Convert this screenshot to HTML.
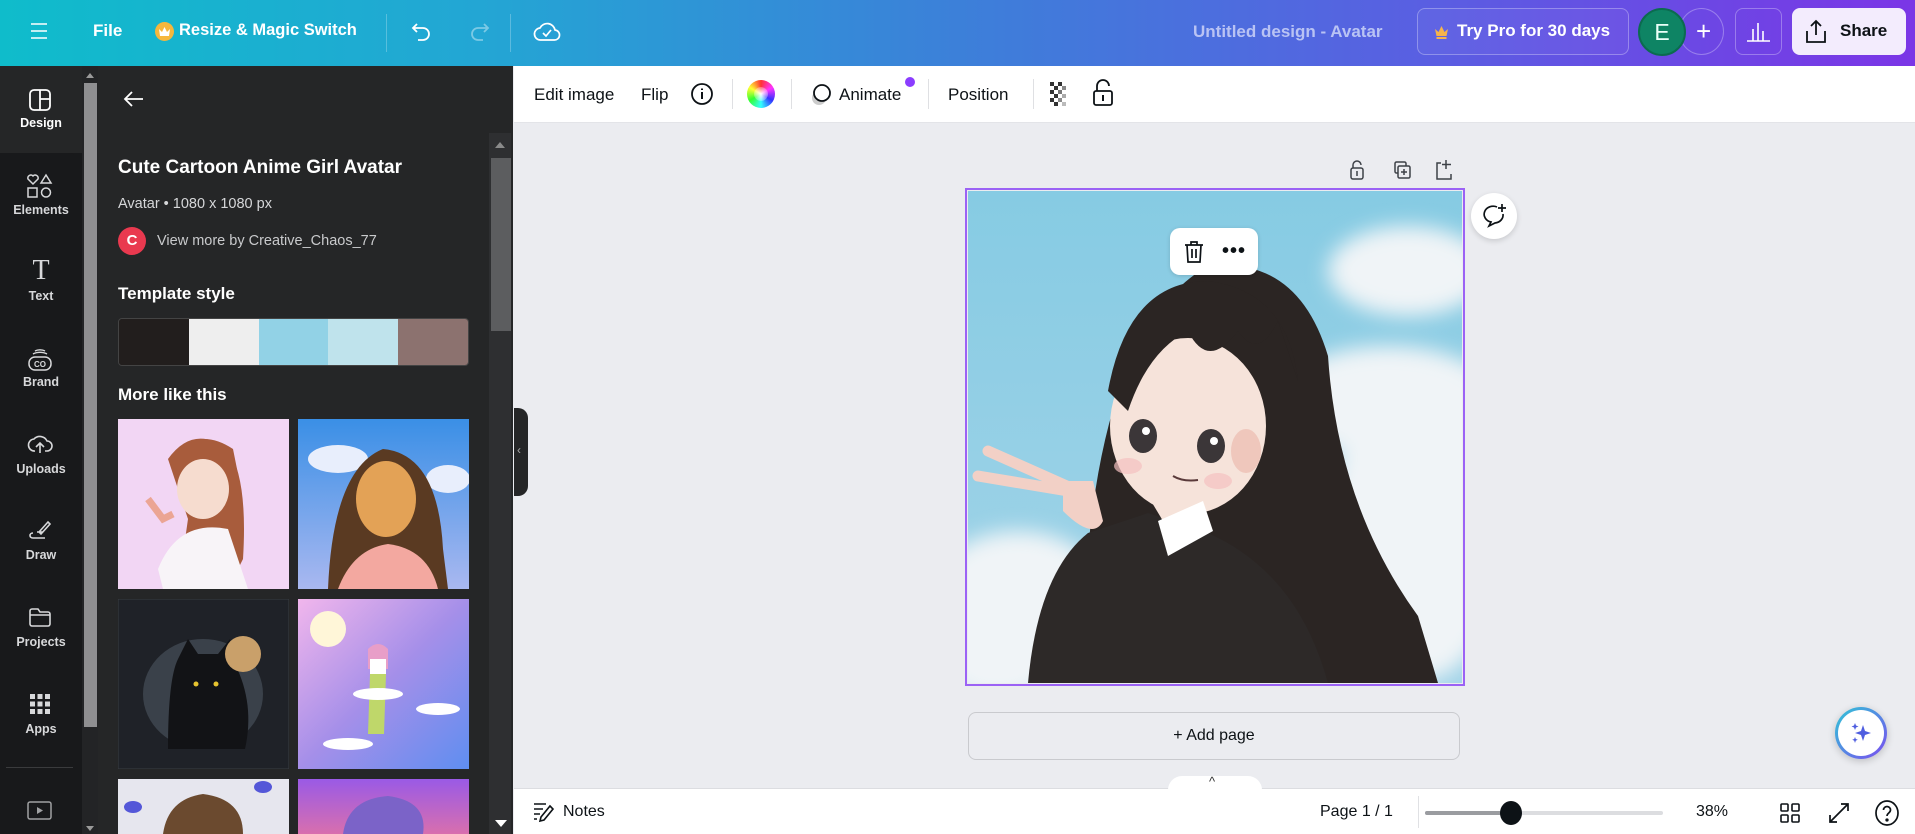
<!DOCTYPE html>
<html><head><meta charset="utf-8">
<style>
*{margin:0;padding:0;box-sizing:border-box}
body{width:1915px;height:834px;overflow:hidden;font-family:"Liberation Sans",sans-serif;background:#ebecf0;position:relative}
.a{position:absolute}
.hdr{left:0;top:0;width:1915px;height:66px;background:linear-gradient(90deg,#0fbccb 0%,#23a6d4 25%,#3c80d9 50%,#5a5ee2 75%,#7b35e6 100%)}
.ht{color:#fff;font-size:17px;font-weight:bold;top:21px}
.vd{width:1px;height:38px;background:rgba(255,255,255,.25);top:14px}
.rail{left:0;top:66px;width:82px;height:768px;background:#18191b}
.ri{width:82px;text-align:center;color:#d7d8da;font-size:12.5px;font-weight:bold}
.panel{left:98px;top:66px;width:415px;height:768px;background:#252627}
.pt{color:#fff}
.tb{left:514px;top:66px;width:1401px;height:57px;background:#fff;border-bottom:1px solid #e3e4e8}
.tt{font-size:17px;color:#0d1216;top:85px}
.td{width:1px;height:30px;background:#dfe0e3;top:79px}
.bb{left:514px;top:788px;width:1401px;height:46px;background:#fff;border-top:1px solid #dcdde1}
.bt{font-size:16px;color:#0d1216;top:803px}
</style></head><body>
<div class="a hdr"></div>
<svg class="a" style="left:29px;top:21px" width="20" height="20" viewBox="0 0 20 20"><path d="M2 3h16M2 10h16M2 17h16" stroke="#fff" stroke-width="1.6"/></svg>
<div class="a ht" style="left:93px">File</div>
<div class="a" style="left:155px;top:22px;width:19px;height:19px;border-radius:50%;background:#f6b73c"></div>
<svg class="a" style="left:158px;top:25px" width="13" height="13" viewBox="0 0 13 13"><path d="M1 4l3 3 2.5-5L9 7l3-3-1 7H2z" fill="#fff"/></svg>
<div class="a ht" style="left:179px;font-size:16.5px">Resize &amp; Magic Switch</div>
<div class="a vd" style="left:386px"></div>
<svg class="a" style="left:409px;top:19px" width="26" height="26" viewBox="0 0 26 26"><path d="M8 5L4 9l4 4M4 9h10a6 6 0 010 12H9" stroke="#fff" stroke-width="1.8" fill="none"/></svg>
<svg class="a" style="left:466px;top:19px" width="26" height="26" viewBox="0 0 26 26" opacity=".4"><path d="M18 5l4 4-4 4M22 9H12a6 6 0 000 12h5" stroke="#fff" stroke-width="1.8" fill="none"/></svg>
<div class="a vd" style="left:510px"></div>
<svg class="a" style="left:532px;top:17px" width="30" height="30" viewBox="0 0 30 30"><path d="M9 23a6 6 0 01-1-12 8 8 0 0115 2 5 5 0 01-1 10z" stroke="#fff" stroke-width="1.7" fill="none"/><path d="M11 16l3 3 5-6" stroke="#fff" stroke-width="1.7" fill="none"/></svg>
<div class="a" style="left:1193px;top:22px;color:#b9c3f4;font-size:17px;font-weight:bold">Untitled design - Avatar</div>
<div class="a" style="left:1417px;top:8px;width:212px;height:47px;border:1px solid rgba(255,255,255,.3);border-radius:8px;background:rgba(255,255,255,.04)"></div>
<svg class="a" style="left:1434px;top:25px" width="15" height="14" viewBox="0 0 15 14"><path d="M1 4l3.5 3L7.5 1l3 6L14 4l-1.5 7h-10z" fill="#f7b44b"/><rect x="2.5" y="12" width="10" height="2" fill="#f7b44b"/></svg>
<div class="a ht" style="left:1457px;top:21px">Try Pro for 30 days</div>
<div class="a" style="left:1679px;top:8px;width:45px;height:47px;border:1px solid rgba(255,255,255,.3);border-radius:50%"></div>
<div class="a" style="left:1696px;top:13px;color:#fff;font-size:26px;line-height:36px">+</div>
<div class="a" style="left:1638px;top:8px;width:48px;height:48px;border-radius:50%;background:#0e8464;border:2px solid #0b6b50;color:#e9fff8;font-size:23px;line-height:44px;text-align:center">E</div>
<div class="a" style="left:1735px;top:8px;width:47px;height:47px;border:1px solid rgba(255,255,255,.3);border-radius:8px"></div>
<svg class="a" style="left:1746px;top:19px" width="25" height="24" viewBox="0 0 25 24"><path d="M1 22h23M7 22V10M12 22V4M17 22V12" stroke="#fff" stroke-width="1.6"/></svg>
<div class="a" style="left:1792px;top:8px;width:114px;height:47px;border-radius:8px;background:#f3ecfd"></div>
<svg class="a" style="left:1804px;top:18px" width="24" height="26" viewBox="0 0 24 26"><path d="M12 17V3M7 8l5-5 5 5M3 13v11h18V13" stroke="#0d1216" stroke-width="1.8" fill="none"/></svg>
<div class="a" style="left:1840px;top:21px;font-size:17px;font-weight:bold;color:#0d1216">Share</div>

<div class="a rail"></div>
<div class="a" style="left:0;top:66px;width:82px;height:87px;background:#252627"></div>
<div class="a" style="left:0;top:153px;width:82px;height:20px;background:#18191b;border-top-right-radius:14px"></div>
<svg class="a" style="left:28px;top:88px" width="24" height="24" viewBox="0 0 24 24"><rect x="2" y="2" width="20" height="20" rx="4" stroke="#fff" stroke-width="1.8" fill="none"/><path d="M12 2v20M12 11h10" stroke="#fff" stroke-width="1.8"/></svg>
<div class="a ri" style="left:0;top:116px;color:#fff">Design</div>
<svg class="a" style="left:26px;top:173px" width="28" height="26" viewBox="0 0 28 26"><path d="M7 11L2 6a3 3 0 015-3 3 3 0 015 3z" stroke="#d7d8da" stroke-width="1.5" fill="none"/><path d="M20 2l5 8H15z" stroke="#d7d8da" stroke-width="1.5" fill="none"/><rect x="2" y="15" width="9" height="9" stroke="#d7d8da" stroke-width="1.5" fill="none"/><circle cx="20" cy="19.5" r="4.5" stroke="#d7d8da" stroke-width="1.5" fill="none"/></svg>
<div class="a ri" style="left:0;top:203px">Elements</div>
<div class="a ri" style="left:0;top:255px;font-family:'Liberation Serif',serif;font-size:28px;font-weight:normal">T</div>
<div class="a ri" style="left:0;top:289px">Text</div>
<svg class="a" style="left:27px;top:347px" width="26" height="26" viewBox="0 0 26 26"><path d="M6 7a10 6 0 0114 0M8 4a7 4 0 0110 0" stroke="#d7d8da" stroke-width="1.4" fill="none"/><rect x="2" y="10" width="22" height="13" rx="6" stroke="#d7d8da" stroke-width="1.5" fill="none"/><text x="13" y="20" font-size="8" font-weight="bold" fill="#d7d8da" text-anchor="middle" font-family="Liberation Sans">CO</text></svg>
<div class="a ri" style="left:0;top:375px">Brand</div>
<svg class="a" style="left:27px;top:432px" width="26" height="24" viewBox="0 0 26 24"><path d="M8 19a6 6 0 01-1-12 8 8 0 0113 2 5 5 0 010 10h-2" stroke="#d7d8da" stroke-width="1.6" fill="none"/><path d="M13 21v-9M9 15l4-4 4 4" stroke="#d7d8da" stroke-width="1.6" fill="none"/></svg>
<div class="a ri" style="left:0;top:462px">Uploads</div>
<svg class="a" style="left:27px;top:518px" width="26" height="24" viewBox="0 0 26 24"><path d="M12 14l9-10 2 2-9 10zM10 14h6M6 15c-4 0-4 5 0 5h12" stroke="#d7d8da" stroke-width="1.6" fill="none"/></svg>
<div class="a ri" style="left:0;top:548px">Draw</div>
<svg class="a" style="left:28px;top:606px" width="24" height="22" viewBox="0 0 24 22"><path d="M2 5a2 2 0 012-2h6l2 3h8a2 2 0 012 2v10a2 2 0 01-2 2H4a2 2 0 01-2-2zM2 9h20" stroke="#d7d8da" stroke-width="1.6" fill="none"/></svg>
<div class="a ri" style="left:0;top:635px">Projects</div>
<svg class="a" style="left:29px;top:693px" width="22" height="22" viewBox="0 0 22 22" fill="#d7d8da"><rect x="1" y="1" width="5" height="5"/><rect x="8.5" y="1" width="5" height="5"/><rect x="16" y="1" width="5" height="5"/><rect x="1" y="8.5" width="5" height="5"/><rect x="8.5" y="8.5" width="5" height="5"/><rect x="16" y="8.5" width="5" height="5"/><rect x="1" y="16" width="5" height="5"/><rect x="8.5" y="16" width="5" height="5"/><rect x="16" y="16" width="5" height="5"/></svg>
<div class="a ri" style="left:0;top:722px">Apps</div>
<div class="a" style="left:6px;top:767px;width:67px;height:1px;background:#3a3b3d"></div>
<svg class="a" style="left:27px;top:801px" width="25" height="19" viewBox="0 0 25 19"><rect x="1" y="1" width="23" height="17" rx="2" stroke="#a0a1a3" stroke-width="1.5" fill="none"/><path d="M10 6l6 3.5-6 3.5z" fill="#a0a1a3"/></svg>
<div class="a" style="left:82px;top:66px;width:16px;height:768px;background:#232426"></div>
<div class="a" style="left:84px;top:83px;width:13px;height:644px;background:#8f8f91"></div>
<div class="a" style="left:86px;top:73px;border:4px solid transparent;border-bottom:5px solid #9a9a9a;border-top:0"></div>
<div class="a" style="left:86px;top:826px;border:4px solid transparent;border-top:5px solid #9a9a9a;border-bottom:0"></div>

<div class="a panel"></div>
<svg class="a" style="left:123px;top:88px" width="22" height="22" viewBox="0 0 22 22"><path d="M20 11H3M9 4l-7 7 7 7" stroke="#fff" stroke-width="1.8" fill="none"/></svg>
<div class="a pt" style="left:118px;top:157px;font-size:19px;font-weight:bold">Cute Cartoon Anime Girl Avatar</div>
<div class="a" style="left:118px;top:196px;font-size:14.5px;color:#d6d7d9">Avatar • 1080 x 1080 px</div>
<div class="a" style="left:118px;top:227px;width:28px;height:28px;border-radius:50%;background:#e9394f;color:#fff;font-size:15px;font-weight:bold;text-align:center;line-height:28px">C</div>
<div class="a" style="left:157px;top:233px;font-size:14.5px;color:#c9cacc">View more by Creative_Chaos_77</div>
<div class="a pt" style="left:118px;top:284px;font-size:17px;font-weight:bold">Template style</div>
<div class="a" style="left:118px;top:318px;width:351px;height:48px;border-radius:4px;overflow:hidden;display:flex;border:1px solid #444">
<div style="flex:1;background:#221e1d"></div><div style="flex:1;background:#eeeeee"></div><div style="flex:1;background:#92d2e6"></div><div style="flex:1;background:#bfe3ec"></div><div style="flex:1;background:#8c726f"></div></div>
<div class="a pt" style="left:118px;top:385px;font-size:17px;font-weight:bold">More like this</div>
<svg class="a" style="left:118px;top:419px" width="171" height="170"><rect width="171" height="170" fill="#f2d6f4"/><path d="M50 40q25-35 60-10q20 30 15 110l-15 30H60l10-70z" fill="#a85c3c"/><ellipse cx="85" cy="70" rx="26" ry="30" fill="#f6dccf"/><path d="M55 50q30-40 65 5l-5-25q-30-20-55 0z" fill="#a85c3c"/><path d="M40 150q20-50 70-40l20 60H45z" fill="#f8f4f8"/><path d="M30 80l15 20 10-5" stroke="#eba594" stroke-width="7" fill="none"/></svg>
<svg class="a" style="left:298px;top:419px" width="171" height="170"><defs><linearGradient id="g2" x1="0" y1="0" x2="0" y2="1"><stop offset="0" stop-color="#3a8fe6"/><stop offset="1" stop-color="#a9b8f0"/></linearGradient></defs><rect width="171" height="170" fill="url(#g2)"/><ellipse cx="40" cy="40" rx="30" ry="14" fill="#e8eefc"/><ellipse cx="150" cy="60" rx="22" ry="14" fill="#e8eefc"/><path d="M30 170q5-120 55-140q55 5 60 100l5 40z" fill="#5a3a22"/><ellipse cx="88" cy="80" rx="30" ry="38" fill="#e3a256"/><path d="M40 170q15-40 50-45q40 5 50 45z" fill="#f3a8a0"/></svg>
<svg class="a" style="left:118px;top:599px" width="171" height="170"><rect width="171" height="170" fill="#1f2228" stroke="#3a3d42"/><ellipse cx="85" cy="95" rx="60" ry="55" fill="#4c5660" opacity=".6"/><path d="M50 150q0-70 10-90l10-20 10 15h20l12-15 5 25q20 40 10 85z" fill="#121316"/><circle cx="125" cy="55" r="18" fill="#c9a06a"/><circle cx="78" cy="85" r="2.5" fill="#e6c430"/><circle cx="98" cy="85" r="2.5" fill="#e6c430"/></svg>
<svg class="a" style="left:298px;top:599px" width="171" height="170"><defs><linearGradient id="g4" x1="0" y1="0" x2="1" y2="1"><stop offset="0" stop-color="#f1b6ec"/><stop offset=".5" stop-color="#a58fe9"/><stop offset="1" stop-color="#5f8ef0"/></linearGradient></defs><rect width="171" height="170" fill="url(#g4)"/><circle cx="30" cy="30" r="18" fill="#fff6d8"/><path d="M70 50q10-10 20 0v20H70z" fill="#e89ec8"/><rect x="72" y="60" width="16" height="15" fill="#fff"/><path d="M72 75h16l-2 60H70z" fill="#bfd76a"/><ellipse cx="80" cy="95" rx="25" ry="6" fill="#fff"/><ellipse cx="140" cy="110" rx="22" ry="6" fill="#fff"/><ellipse cx="50" cy="145" rx="25" ry="6" fill="#fff"/></svg>
<svg class="a" style="left:118px;top:779px" width="171" height="55"><rect width="171" height="55" fill="#e6e6ee"/><path d="M45 55q5-35 40-40q40 5 40 40z" fill="#6b4a2f"/><ellipse cx="15" cy="28" rx="9" ry="6" fill="#5457d8"/><ellipse cx="145" cy="8" rx="9" ry="6" fill="#5457d8"/></svg>
<svg class="a" style="left:298px;top:779px" width="171" height="55"><defs><linearGradient id="g6" x1="0" y1="0" x2="0" y2="1"><stop offset="0" stop-color="#9a5ae6"/><stop offset="1" stop-color="#d86fae"/></linearGradient></defs><rect width="171" height="55" fill="url(#g6)"/><path d="M45 55q5-35 45-38q40 5 35 38z" fill="#7b63c8"/></svg>
<div class="a" style="left:489px;top:133px;width:22px;height:701px;background:#2e2f31"></div>
<div class="a" style="left:491px;top:158px;width:20px;height:173px;background:#5c5d5f"></div>
<div class="a" style="left:495px;top:142px;border:5px solid transparent;border-bottom:6px solid #8a8a8a;border-top:0"></div>
<div class="a" style="left:495px;top:820px;border:6px solid transparent;border-top:7px solid #fff;border-bottom:0"></div>
<div class="a" style="left:514px;top:408px;width:14px;height:88px;background:#252627;border-radius:0 10px 10px 0"></div>
<div class="a" style="left:517px;top:443px;color:#aaa;font-size:12px">‹</div>

<div class="a tb"></div>
<div class="a tt" style="left:534px">Edit image</div>
<div class="a tt" style="left:641px">Flip</div>
<svg class="a" style="left:690px;top:82px" width="24" height="24" viewBox="0 0 24 24"><circle cx="12" cy="12" r="10" stroke="#0d1216" stroke-width="1.8" fill="none"/><path d="M12 10v7M12 6.5v1.5" stroke="#0d1216" stroke-width="2"/></svg>
<div class="a td" style="left:732px"></div>
<div class="a" style="left:747px;top:80px;width:28px;height:28px;border-radius:50%;background:conic-gradient(#f33,#f3f,#33f,#3ff,#3f3,#ff3,#f33)"><div style="margin:7px;width:14px;height:14px;border-radius:50%;background:radial-gradient(#fff,rgba(255,255,255,0))"></div></div>
<div class="a td" style="left:791px"></div>
<svg class="a" style="left:808px;top:82px" width="26" height="26" viewBox="0 0 26 26"><circle cx="11" cy="16" r="7" fill="#ccc"/><circle cx="14" cy="11" r="8" stroke="#0d1216" stroke-width="1.8" fill="#fff"/></svg>
<div class="a tt" style="left:839px">Animate</div>
<div class="a" style="left:905px;top:77px;width:10px;height:10px;border-radius:50%;background:#8b3dff"></div>
<div class="a td" style="left:928px"></div>
<div class="a tt" style="left:948px">Position</div>
<div class="a td" style="left:1033px"></div>
<svg class="a" style="left:1050px;top:82px" width="24" height="24" viewBox="0 0 24 24"><g fill="#333"><rect x="0" y="0" width="4" height="4"/><rect x="8" y="0" width="4" height="4"/><rect x="4" y="4" width="4" height="4"/><rect x="12" y="4" width="4" height="4" fill="#888"/><rect x="0" y="8" width="4" height="4"/><rect x="8" y="8" width="4" height="4" fill="#777"/><rect x="4" y="12" width="4" height="4"/><rect x="12" y="12" width="4" height="4" fill="#aaa"/><rect x="0" y="16" width="4" height="4"/><rect x="8" y="16" width="4" height="4" fill="#888"/><rect x="4" y="20" width="4" height="4"/><rect x="12" y="20" width="4" height="4" fill="#bbb"/></g></svg>
<svg class="a" style="left:1092px;top:79px" width="22" height="28" viewBox="0 0 22 28"><path d="M5 12V7a6 6 0 0112 0" stroke="#0d1216" stroke-width="1.8" fill="none"/><rect x="2" y="12" width="18" height="14" rx="2" stroke="#0d1216" stroke-width="1.8" fill="none"/><path d="M11 16v6" stroke="#0d1216" stroke-width="2"/></svg>

<svg class="a" style="left:1347px;top:158px" width="108" height="24" viewBox="0 0 108 24" stroke="#3d4147" stroke-width="1.5" fill="none"><path d="M6 10V7a4 4 0 018 0"/><rect x="4" y="10" width="12" height="11" rx="2"/><path d="M10 13v5"/><rect x="48" y="4" width="11" height="11" rx="1.5"/><rect x="51" y="8" width="12" height="12" rx="1.5" fill="#ebecf0"/><path d="M57 11v6M54 14h6"/><path d="M94 5h-4v16h14v-5M99 2v9M95 6.5h9"/></svg>
<div class="a" style="left:965px;top:188px;width:500px;height:498px;border:2px solid #9b62f5"></div>
<svg class="a" style="left:968px;top:191px" width="494" height="492" viewBox="0 0 494 492">
<defs><linearGradient id="sky" x1="0" y1="0" x2="0" y2="1"><stop offset="0" stop-color="#86cbe3"/><stop offset="1" stop-color="#a3d4e8"/></linearGradient>
<filter id="bl"><feGaussianBlur stdDeviation="10"/></filter></defs>
<rect width="494" height="492" fill="url(#sky)"/>
<g fill="#f0f4f7" filter="url(#bl)"><ellipse cx="440" cy="80" rx="80" ry="45"/><ellipse cx="420" cy="210" rx="110" ry="55"/><ellipse cx="450" cy="340" rx="90" ry="150"/><ellipse cx="50" cy="410" rx="90" ry="70"/><ellipse cx="30" cy="470" rx="60" ry="40"/></g>
<path d="M115 440q10-300 125-365q90-10 120 90q10 150 90 260l20 67H150z" fill="#2b2523"/>
<path d="M60 492q10-110 60-150l60-20 60 20q90 40 120 150z" fill="#2d2928"/>
<path d="M95 290l0 30q30 30 40 10l-10-40z" fill="#f2d0c6"/>
<path d="M20 260l90 40M10 285l90 15" stroke="#f2d0c6" stroke-width="11" stroke-linecap="round"/>
<ellipse cx="220" cy="235" rx="78" ry="88" fill="#f6e3da"/>
<path d="M180 305h60l-15 25h-30z" fill="#f6e3da"/>
<path d="M190 330l45-20 10 30-45 25z" fill="#fff"/>
<path d="M140 200q20-110 100-110q80 10 90 100l-20-60q-20 40-40 10q-30 40-50 0q-40 20-60 80z" fill="#2b2523"/>
<ellipse cx="175" cy="245" rx="14" ry="17" fill="#3b3638"/><ellipse cx="243" cy="255" rx="14" ry="17" fill="#3b3638"/>
<circle cx="178" cy="240" r="4" fill="#fff"/><circle cx="246" cy="250" r="4" fill="#fff"/>
<ellipse cx="160" cy="275" rx="14" ry="8" fill="#f5c0c0" opacity=".7"/><ellipse cx="250" cy="290" rx="14" ry="8" fill="#f5c0c0" opacity=".7"/>
<path d="M205 285q10 6 25 4" stroke="#5a3a3a" stroke-width="2" fill="none"/>
<ellipse cx="278" cy="260" rx="15" ry="22" fill="#efc7bc"/>
</svg>
<div class="a" style="left:1170px;top:228px;width:88px;height:47px;border-radius:10px;background:#fff;box-shadow:0 1px 4px rgba(0,0,0,.15)"></div>
<svg class="a" style="left:1183px;top:240px" width="22" height="24" viewBox="0 0 22 24" stroke="#0d1216" stroke-width="1.7" fill="none"><path d="M2 5h18M8 5V2h6v3M4 5l1 17h12l1-17M9 9v9M13 9v9"/></svg>
<div class="a" style="left:1222px;top:240px;font-size:20px;font-weight:bold;color:#0d1216;letter-spacing:1px">•••</div>
<div class="a" style="left:1471px;top:193px;width:46px;height:46px;border-radius:50%;background:#fff;box-shadow:0 2px 6px rgba(0,0,0,.15)"></div>
<svg class="a" style="left:1481px;top:202px" width="28" height="26" viewBox="0 0 28 26" stroke="#0d1216" stroke-width="1.7" fill="none"><path d="M16 5a9 8 0 10-6 15l-2 4 6-3a9 8 0 008-9"/><path d="M21 2v8M17 6h8"/></svg>
<div class="a" style="left:968px;top:712px;width:492px;height:48px;border:1px solid #c9cace;border-radius:8px;text-align:center;line-height:46px;font-size:16px;color:#0d1216">+ Add page</div>
<div class="a" style="left:1835px;top:707px;width:52px;height:52px;border-radius:50%;background:linear-gradient(135deg,#2fc6d6,#7b4cf0);box-shadow:0 2px 8px rgba(0,0,0,.2)"></div>
<div class="a" style="left:1838px;top:710px;width:46px;height:46px;border-radius:50%;background:#fff"></div>
<svg class="a" style="left:1849px;top:721px" width="24" height="24" viewBox="0 0 24 24" fill="#4f5ee0"><path d="M14 4l2 6 6 2-6 2-2 6-2-6-6-2 6-2z"/><path d="M6 2l1 2.5 2.5 1-2.5 1L6 9l-1-2.5-2.5-1 2.5-1z"/><path d="M6 16l.8 2 2 .8-2 .8L6 22l-.8-2.4-2-.8 2-.8z"/></svg>

<div class="a bb"></div>
<div class="a" style="left:1168px;top:776px;width:94px;height:14px;background:#fff;border-radius:14px 14px 0 0"></div>
<div class="a" style="left:1209px;top:774px;font-size:13px;color:#333">^</div>
<svg class="a" style="left:533px;top:801px" width="22" height="22" viewBox="0 0 22 22" stroke="#0d1216" stroke-width="1.6" fill="none"><path d="M1 3h12M1 8h9M1 13h6M1 18h3M17 5l3 3-9 11-4 1 1-4z"/></svg>
<div class="a bt" style="left:563px">Notes</div>
<div class="a bt" style="left:1320px">Page 1 / 1</div>
<div class="a" style="left:1418px;top:796px;width:1px;height:32px;background:#e0e1e4"></div>
<div class="a" style="left:1425px;top:811px;width:238px;height:4px;border-radius:2px;background:#dcdde0"></div>
<div class="a" style="left:1425px;top:811px;width:86px;height:4px;border-radius:2px;background:#9a9ca0"></div>
<div class="a" style="left:1500px;top:801px;width:22px;height:24px;border-radius:50%;background:#0d1216"></div>
<div class="a bt" style="left:1696px">38%</div>
<svg class="a" style="left:1780px;top:803px" width="20" height="20" viewBox="0 0 20 20" stroke="#0d1216" stroke-width="1.6" fill="none"><rect x="1" y="1" width="7" height="7" rx="1"/><rect x="12" y="1" width="7" height="7" rx="1"/><rect x="1" y="12" width="7" height="7" rx="1"/><rect x="12" y="12" width="7" height="7" rx="1"/></svg>
<svg class="a" style="left:1828px;top:802px" width="22" height="22" viewBox="0 0 22 22" stroke="#0d1216" stroke-width="1.7" fill="none"><path d="M13 2h7v7M20 2L2 20M2 13v7h7"/></svg>
<svg class="a" style="left:1874px;top:799px" width="26" height="28" viewBox="0 0 26 28" stroke="#0d1216" stroke-width="1.7" fill="none"><ellipse cx="13" cy="14" rx="11" ry="12"/><path d="M9.5 11a3.5 3.5 0 117 0c0 3-3.5 3-3.5 6"/><circle cx="13" cy="21" r=".8" fill="#0d1216"/></svg>
</body></html>
